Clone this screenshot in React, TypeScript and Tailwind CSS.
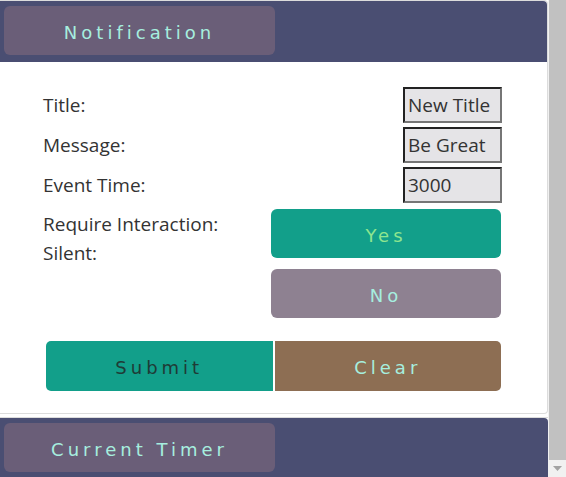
import React from 'react';

const btnFont = { fontFamily: '"DejaVu Sans", "Liberation Sans", sans-serif' };

const Field = ({ label, value }: { label: string; value: string }) => (
  <div className="flex items-center justify-between h-9">
    <span className="text-[19px] text-[#333] leading-none">{label}</span>
    <input
      readOnly
      value={value}
      className="w-[99px] h-9 bg-[#e5e4e7] text-[19px] text-[#333] px-[3px] border-2 border-t-[#222] border-l-[#222] border-b-[#767676] border-r-[#767676] outline-none"
    />
  </div>
);

const SectionHeader = ({ title }: { title: string }) => (
  <div className="h-[61px] bg-[#4a4e72] rounded-tr-[4px] pt-[5px] pl-1">
    <button
      style={btnFont}
      className="w-[271px] h-[49px] rounded-[6px] bg-[#6a5e78] text-[#a6eedf] text-[18px] tracking-[4px] pt-[3px]"
    >
      {title}
    </button>
  </div>
);

export default function App() {
  return (
    <div className="flex h-[477px] overflow-hidden bg-white" style={{ fontFamily: '"Open Sans", "Noto Sans", sans-serif' }}>
      <div className="w-[548px] shrink-0">
        {/* Notification card */}
        <div className="border-t border-r border-b border-[#dcdcdc] rounded-r-[4px]">
          <SectionHeader title="Notification" />
          <div className="pl-[43px] pr-[45px] pt-[25px] pb-[22px]">
            <div className="flex flex-col gap-1">
              <Field label="Title:" value="New Title" />
              <Field label="Message:" value="Be Great" />
              <Field label="Event Time:" value="3000" />
            </div>

            <div className="flex justify-between mt-[6px] pr-[1px]">
              <div className="flex flex-col text-[19px] text-[#333] leading-[29px] pt-[1px]">
                <span>Require Interaction:</span>
                <span>Silent:</span>
              </div>
              <div className="flex flex-col gap-[11px] w-[230px]">
                <button style={btnFont} className="h-[49px] rounded-[6px] bg-[#129f8a] text-[#8ee68f] text-[18px] tracking-[4px] pt-[3px]">
                  Yes
                </button>
                <button style={btnFont} className="h-[49px] rounded-[6px] bg-[#8e8191] text-[#a6eedf] text-[18px] tracking-[4px] pt-[3px]">
                  No
                </button>
              </div>
            </div>

            <div className="flex gap-[2px] mt-[23px] ml-[3px] mr-[1px]">
              <button style={btnFont} className="flex-1 h-[50px] rounded-l-[5px] bg-[#129f8a] text-[#1f3b36] text-[18px] tracking-[4px] pt-[3px]">
                Submit
              </button>
              <button style={btnFont} className="flex-1 h-[50px] rounded-r-[5px] bg-[#8d6e53] text-[#a6eedf] text-[18px] tracking-[4px] pt-[3px]">
                Clear
              </button>
            </div>
          </div>
        </div>

        {/* Current Timer card */}
        <div className="mt-[3px] border-t border-[#dcdcdc]">
          <SectionHeader title="Current Timer" />
          <div className="h-[24px] bg-[#4a4e72]" />
        </div>
      </div>

      {/* scrollbar */}
      <div className="flex-1 flex flex-col bg-[#f1f1f1] pl-[1px]">
        <div className="flex-1 bg-[#c1c1c1]" />
        <div className="h-[17px] flex items-center justify-center">
          <svg width="9" height="5" viewBox="0 0 9 5">
            <path d="M0 0h9L4.5 5z" fill="#a3a3a3" />
          </svg>
        </div>
      </div>
    </div>
  );
}
